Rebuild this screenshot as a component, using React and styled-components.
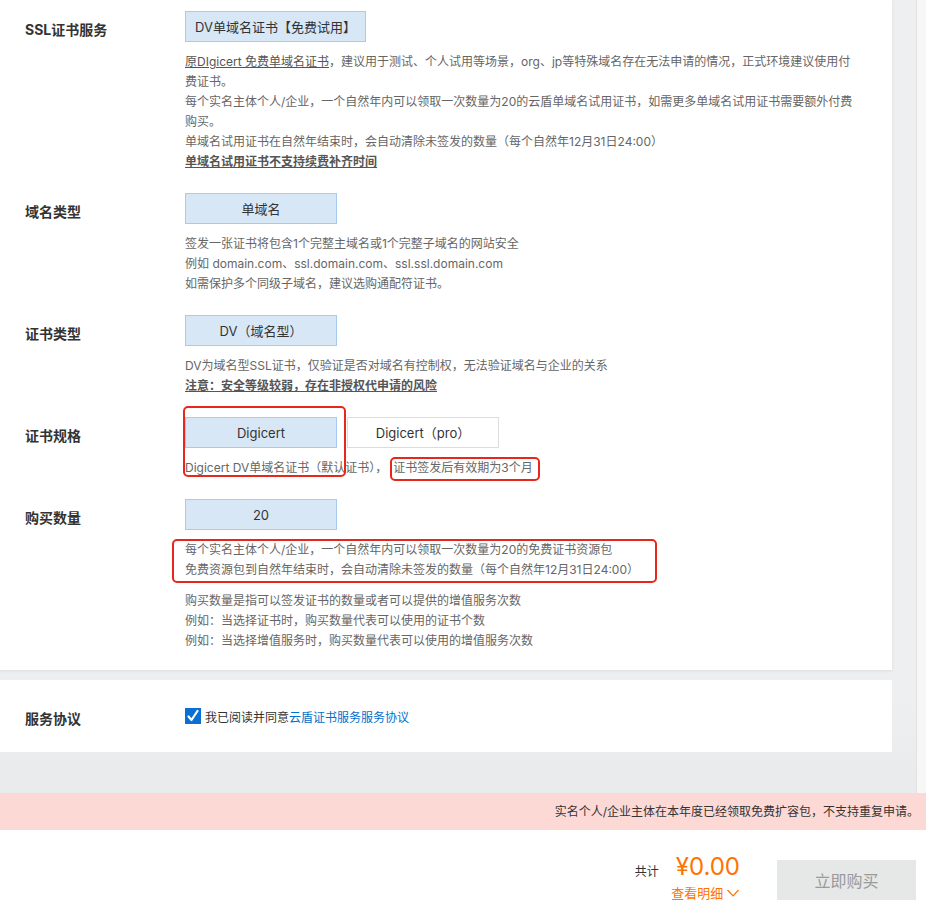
import React from "react";
import styled, { createGlobalStyle } from "styled-components";

const Global = createGlobalStyle`
  html, body { margin: 0; padding: 0; background: #fff; }
  body { font-family: "Inter", "Noto Sans CJK SC", sans-serif; color: #333; }
  * { box-sizing: border-box; }
`;

const Page = styled.div`
  width: 926px;
  height: 908px;
  display: flex;
  flex-direction: column;
  overflow: hidden;
`;

const Main = styled.div`
  height: 793px;
  display: flex;
  flex-shrink: 0;
`;

const Scroller = styled.div`
  flex: 1;
  background: linear-gradient(#eeeff1 0, #eeeff1 88%, #e9eaec 100%);
  padding-right: 24px;
  overflow: hidden;
`;

const Track = styled.div`
  width: 10px;
  background: #f7f7f7;
  border-left: 1px solid #e2e2e2;
`;

const Panel = styled.div`
  background: #fff;
  box-shadow: 0 1px 3px rgba(0, 0, 0, 0.08);
  padding: 11px 0 19px;
`;

const AgreePanel = styled.div`
  margin-top: 10px;
  height: 72px;
  background: #fff;
  display: grid;
  grid-template-columns: 185px 1fr;
  align-items: center;
`;

const Section = styled.div`
  display: grid;
  grid-template-columns: 185px 1fr;
  & + & { margin-top: 21px; }
`;

const Label = styled.div`
  padding: 9px 0 0 25px;
  font-size: 14px;
  line-height: 20px;
  font-weight: bold;
  color: #333;
`;

const AgreeLabel = styled(Label)`
  padding-top: 5px;
`;

const Content = styled.div`
  position: relative;
`;

const Options = styled.div`
  display: flex;
  gap: 10px;
`;

const Option = styled.div`
  width: ${(p) => (p.$wide ? 181 : 152)}px;
  height: 31px;
  border: 1px solid ${(p) => (p.$selected ? "#a6cbee" : "#dcdcdc")};
  background: ${(p) => (p.$selected ? "#d8e7f6" : "#fff")};
  display: flex;
  align-items: center;
  justify-content: center;
  font-size: 13px;
  color: #333;
  white-space: nowrap;
`;

const Desc = styled.div`
  margin-top: ${(p) => (p.$gap != null ? p.$gap : 10)}px;
  font-size: 12px;
  line-height: 20px;
  color: #666;
  white-space: nowrap;
  position: relative;
`;

const Line = styled.div``;

const Under = styled.span`
  text-decoration: underline;
  color: #555;
  font-weight: ${(p) => (p.$bold ? 600 : 400)};
`;

const Mark = styled.span`
  position: relative;
  margin-left: 6px;
`;

const RedBox = styled.div`
  position: absolute;
  border: 2px solid #e8271c;
  border-radius: 5px;
  pointer-events: none;
`;

const Check = styled.label`
  display: flex;
  align-items: center;
  gap: 4px;
  font-size: 12px;
  color: #333;
`;

const Link = styled.span`
  color: #0070cc;
`;

const Notice = styled.div`
  height: 37px;
  flex-shrink: 0;
  background: #fdd9d6;
  font-size: 12px;
  color: #333;
  line-height: 37px;
  text-align: right;
  padding-right: 7px;
`;

const Footer = styled.div`
  flex: 1;
  background: #fff;
  display: flex;
  justify-content: flex-end;
  align-items: flex-start;
  padding: 22px 10px 0 0;
`;

const TotalLabel = styled.div`
  margin-top: 12px;
  font-size: 12px;
  line-height: 16px;
  color: #333;
`;

const PriceCol = styled.div`
  margin-left: 12px;
  display: flex;
  flex-direction: column;
  align-items: center;
`;

const Price = styled.div`
  font-size: 24px;
  line-height: 30px;
  color: #ff7300;
  padding-left: 5px;
`;

const Detail = styled.div`
  margin-top: 2px;
  display: flex;
  align-items: center;
  gap: 4px;
  font-size: 13px;
  line-height: 18px;
  color: #ff7300;
`;

const BuyButton = styled.div`
  margin: 8px 0 0 37px;
  width: 139px;
  height: 40px;
  background: #e6e7e7;
  color: #9a9a9a;
  font-size: 16px;
  display: flex;
  align-items: center;
  justify-content: center;
`;

export default function App() {
  return (
    <Page>
      <Global />
      <Main>
        <Scroller>
          <Panel>
            <Section>
              <Label>SSL证书服务</Label>
              <Content>
                <Options>
                  <Option $selected $wide>DV单域名证书【免费试用】</Option>
                </Options>
                <Desc>
                  <Line>
                    <Under>原DIgicert 免费单域名证书</Under>，建议用于测试、个人试用等场景，org、jp等特殊域名存在无法申请的情况，正式环境建议使用付
                  </Line>
                  <Line>费证书。</Line>
                  <Line>每个实名主体个人/企业，一个自然年内可以领取一次数量为20的云盾单域名试用证书，如需更多单域名试用证书需要额外付费</Line>
                  <Line>购买。</Line>
                  <Line>单域名试用证书在自然年结束时，会自动清除未签发的数量（每个自然年12月31日24:00）</Line>
                  <Line><Under $bold>单域名试用证书不支持续费补齐时间</Under></Line>
                </Desc>
              </Content>
            </Section>

            <Section>
              <Label>域名类型</Label>
              <Content>
                <Options>
                  <Option $selected>单域名</Option>
                </Options>
                <Desc>
                  <Line>签发一张证书将包含1个完整主域名或1个完整子域名的网站安全</Line>
                  <Line>例如 domain.com、ssl.domain.com、ssl.ssl.domain.com</Line>
                  <Line>如需保护多个同级子域名，建议选购通配符证书。</Line>
                </Desc>
              </Content>
            </Section>

            <Section>
              <Label>证书类型</Label>
              <Content>
                <Options>
                  <Option $selected>DV（域名型）</Option>
                </Options>
                <Desc>
                  <Line>DV为域名型SSL证书，仅验证是否对域名有控制权，无法验证域名与企业的关系</Line>
                  <Line><Under $bold>注意：安全等级较弱，存在非授权代申请的风险</Under></Line>
                </Desc>
              </Content>
            </Section>

            <Section>
              <Label>证书规格</Label>
              <Content>
                <Options>
                  <Option $selected>Digicert</Option>
                  <Option>Digicert（pro）</Option>
                </Options>
                <Desc>
                  <Line>
                    Digicert DV单域名证书（默认证书），
                    <Mark>
                      证书签发后有效期为3个月
                      <RedBox style={{ left: -3, right: -7, top: -3, bottom: -6 }} />
                    </Mark>
                  </Line>
                </Desc>
                <RedBox style={{ left: -2, top: -11, width: 163, height: 71 }} />
              </Content>
            </Section>

            <Section>
              <Label>购买数量</Label>
              <Content>
                <Options>
                  <Option $selected>20</Option>
                </Options>
                <Desc>
                  <Line>每个实名主体个人/企业，一个自然年内可以领取一次数量为20的免费证书资源包</Line>
                  <Line>免费资源包到自然年结束时，会自动清除未签发的数量（每个自然年12月31日24:00）</Line>
                  <RedBox style={{ left: -13, top: -1, width: 485, height: 44 }} />
                </Desc>
                <Desc $gap={11}>
                  <Line>购买数量是指可以签发证书的数量或者可以提供的增值服务次数</Line>
                  <Line>例如：当选择证书时，购买数量代表可以使用的证书个数</Line>
                  <Line>例如：当选择增值服务时，购买数量代表可以使用的增值服务次数</Line>
                </Desc>
              </Content>
            </Section>
          </Panel>

          <AgreePanel>
            <AgreeLabel>服务协议</AgreeLabel>
            <Check>
              <svg width="16" height="16" viewBox="0 0 16 16">
                <rect width="16" height="16" fill="#0a6fd1" />
                <polyline points="3.5,8.5 6.5,12 12.5,3" fill="none" stroke="#fff" strokeWidth="2.2" strokeLinecap="round" strokeLinejoin="round" />
              </svg>
              <span>
                我已阅读并同意<Link>云盾证书服务服务协议</Link>
              </span>
            </Check>
          </AgreePanel>
        </Scroller>
        <Track />
      </Main>

      <Notice>实名个人/企业主体在本年度已经领取免费扩容包，不支持重复申请。</Notice>

      <Footer>
        <TotalLabel>共计</TotalLabel>
        <PriceCol>
          <Price>¥0.00</Price>
          <Detail>
            查看明细
            <svg width="12" height="8" viewBox="0 0 12 8">
              <polyline points="0.5,1 6,6.8 11.5,1" fill="none" stroke="#ff7300" strokeWidth="1.2" />
            </svg>
          </Detail>
        </PriceCol>
        <BuyButton>立即购买</BuyButton>
      </Footer>
    </Page>
  );
}
